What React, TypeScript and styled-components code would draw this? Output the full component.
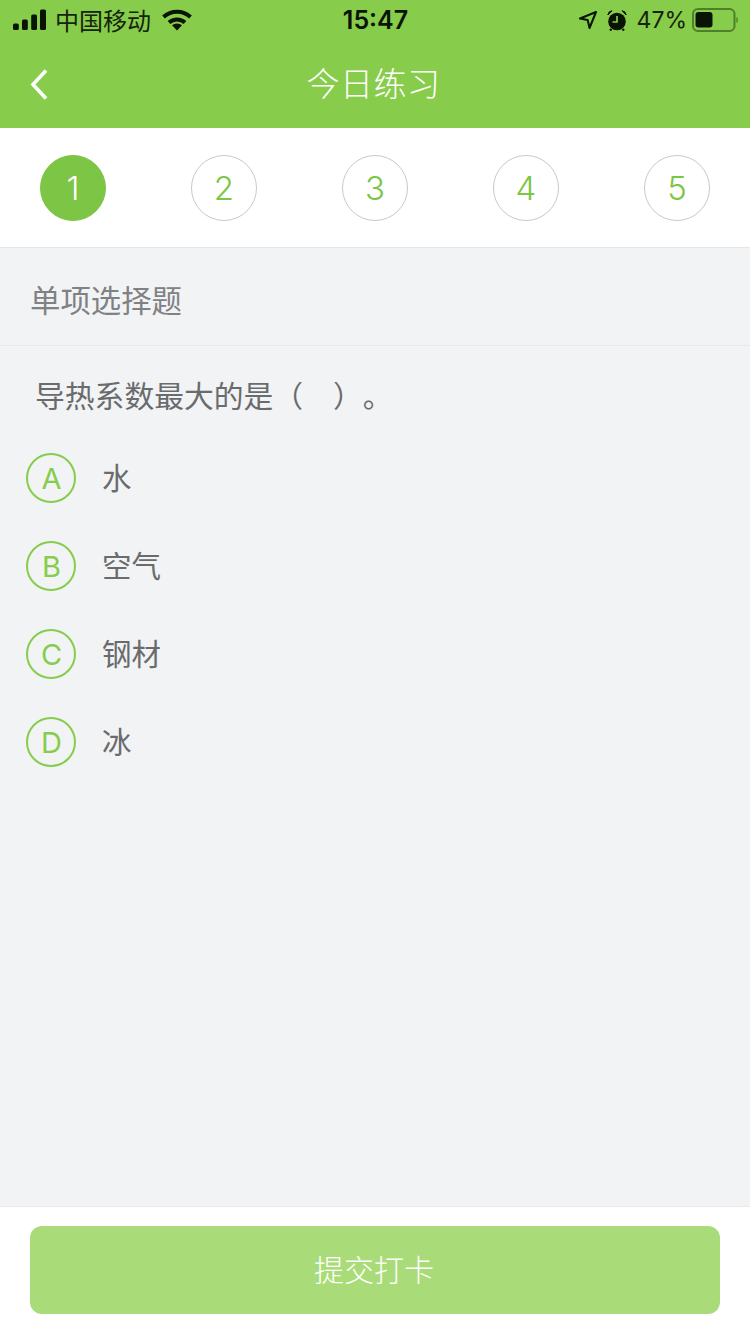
import React from "react";
import styled, { createGlobalStyle } from "styled-components";

const FONT = `"Noto Sans CJK SC", Inter, "Liberation Sans", sans-serif`;
const GREEN = "#87cc4b";

const Global = createGlobalStyle`
  html, body { margin: 0; padding: 0; background: #f2f3f5; }
  * { box-sizing: border-box; }
`;
const Page = styled.div`
  width: 750px; height: 1334px; display: flex; flex-direction: column;
  background: #f2f3f5; font-family: ${FONT}; overflow: hidden;
`;
const Header = styled.header`
  background: ${GREEN}; height: 128px; display: flex; flex-direction: column; flex: none;
`;
const StatusBar = styled.div`
  height: 40px; display: grid; grid-template-columns: 1fr auto 1fr; align-items: center;
  padding: 0 12px 0 13px; color: #0d1a05;
`;
const StatusLeft = styled.div`display: flex; align-items: center;`;
const StatusRight = styled.div`display: flex; align-items: center; justify-content: flex-end;`;
const Carrier = styled.span`font-size: 24px; line-height: 40px; margin: 0 11px 0 9px; color: #15240c; font-weight: 400;`;
const Clock = styled.span`font-family: Inter, "Liberation Sans", sans-serif; font-size: 25px; font-weight: 600; color: #0a1404;`;
const Percent = styled.span`font-family: Inter, "Liberation Sans", sans-serif; font-size: 23px; font-weight: 400; margin: 0 5px 0 10px; color: #15240c;`;
const NavBar = styled.div`
  height: 88px; display: flex; align-items: center; justify-content: center; position: relative; padding: 0 3px 4px 0;
`;
const BackButton = styled.button`
  position: absolute; left: 30px; top: 29px; padding: 0; border: 0; background: none; display: flex;
`;
const Title = styled.h1`
  margin: 0; font-size: 33px; font-weight: 300; color: #fff; letter-spacing: 0.5px; line-height: 44px;
`;
const Steps = styled.nav`
  flex: none; height: 120px; background: #fff; border-bottom: 1px solid #e6e6e6;
  display: flex; justify-content: space-between; align-items: flex-start; padding: 27px 40px 0;
`;
const Step = styled.div<{ $active?: boolean }>`
  width: 66px; height: 66px; border-radius: 50%;
  border: 1px solid ${(p) => (p.$active ? "#7cc545" : "#c9c9c9")};
  background: ${(p) => (p.$active ? "#7cc545" : "#fff")};
  color: ${(p) => (p.$active ? "#fff" : "#7cc545")};
  display: flex; align-items: center; justify-content: center;
  font-family: Inter, "Liberation Sans", sans-serif; font-size: 33px; font-weight: 300;
`;
const Main = styled.main`flex: 1; display: flex; flex-direction: column;`;
const SectionTitle = styled.div`
  height: 98px; border-bottom: 1px solid #e7e8ea; padding: 32px 0 0 30px;
  font-size: 30.4px; line-height: 38px; font-weight: 400; color: #808183;
`;
const Question = styled.p`
  margin: 0; padding: 28px 0 0 35px; font-size: 29.8px; line-height: 40px; font-weight: 400; color: #6a6b6d;
  white-space: pre; text-spacing-trim: space-all;
`;
const Options = styled.ul`
  list-style: none; margin: 39px 0 0; padding: 0 0 0 26px; display: flex; flex-direction: column; gap: 38px;
`;
const Option = styled.li`display: flex; align-items: center; gap: 26px;`;
const Badge = styled.span`
  width: 50px; height: 50px; border-radius: 50%; border: 2px solid #86cd4b; color: #86cd4b;
  display: flex; align-items: center; justify-content: center;
  font-family: Inter, "Liberation Sans", sans-serif; font-size: 29px; font-weight: 400; padding-left: 1px;
`;
const OptionText = styled.span`font-size: 29.5px; line-height: 40px; font-weight: 400; color: #6a6b6d; padding-bottom: 5px;`;
const Footer = styled.footer`
  flex: none; height: 128px; background: #fff; border-top: 1px solid #e8e9ec; padding: 19px 30px 0;
`;
const Submit = styled.button`
  width: 690px; height: 88px; border: 0; border-radius: 12px; background: #a9dc78; color: #fff;
  font-family: ${FONT}; font-size: 30px; font-weight: 300; padding: 0 2px 4px 0;
`;

const Signal = () => (
  <svg width="33" height="22" viewBox="0 0 33 22" fill="#0a1404">
    <rect x="0" y="14.5" width="5.8" height="6.5" rx="1.5" />
    <rect x="9" y="10.5" width="5.8" height="10.5" rx="1.5" />
    <rect x="18.2" y="5.5" width="5.8" height="15.5" rx="1.5" />
    <rect x="27" y="0.5" width="6" height="20.5" rx="1.5" />
  </svg>
);
const Wifi = () => (
  <svg width="30" height="22" viewBox="0 0 30 22">
    <path d="M1.5 8 A20 20 0 0 1 28.5 8" fill="none" stroke="#0a1404" strokeWidth="4" />
    <path d="M7 13.5 A12 12 0 0 1 23 13.5" fill="none" stroke="#0a1404" strokeWidth="4" />
    <path d="M10 16.3 A7.5 7.5 0 0 1 20 16.3 L15 21.5 Z" fill="#0a1404" />
  </svg>
);
const Location = () => (
  <svg width="18" height="18" viewBox="0 0 18 18" style={{ marginRight: 10 }}>
    <path d="M17 1 L1 7.5 L8.7 9 L10.5 17 Z" fill="none" stroke="#0a1404" strokeWidth="2" strokeLinejoin="round" />
  </svg>
);
const Alarm = () => (
  <svg width="20" height="21" viewBox="0 0 20 21">
    <circle cx="10" cy="11.5" r="8.8" fill="#0a1404" />
    <path d="M0.8 5 Q1.5 1 5 0.8 Z M19.2 5 Q18.5 1 15 0.8 Z" fill="#0a1404" stroke="#0a1404" strokeWidth="1" />
    <path d="M4.5 19 L3 20.5 M15.5 19 L17 20.5" stroke="#0a1404" strokeWidth="2.2" />
    <path d="M10 6 V12 H5.5" fill="none" stroke="#87cc4b" strokeWidth="1.7" />
  </svg>
);
const Battery = () => (
  <svg width="46" height="24" viewBox="0 0 46 24">
    <rect x="1" y="1" width="41.5" height="22" rx="5" fill="none" stroke="#4f7f2c" strokeWidth="2" />
    <rect x="3.5" y="4" width="17" height="15.5" rx="3" fill="#0a1404" />
    <path d="M45 9.5 V14.5" fill="none" stroke="#4f7f2c" strokeWidth="1.4" />
  </svg>
);
const Chevron = () => (
  <svg width="18" height="31" viewBox="0 0 18 31">
    <path d="M16 1.5 L3 15.5 L16 29.5" fill="none" stroke="#fff" strokeWidth="3.6" />
  </svg>
);

const options = [
  ["A", "水"],
  ["B", "空气"],
  ["C", "钢材"],
  ["D", "冰"],
];

export default function App() {
  return (
    <Page>
      <Global />
      <Header>
        <StatusBar>
          <StatusLeft>
            <Signal />
            <Carrier>中国移动</Carrier>
            <Wifi />
          </StatusLeft>
          <Clock>15:47</Clock>
          <StatusRight>
            <Location />
            <Alarm />
            <Percent>47%</Percent>
            <Battery />
          </StatusRight>
        </StatusBar>
        <NavBar>
          <BackButton aria-label="返回"><Chevron /></BackButton>
          <Title>今日练习</Title>
        </NavBar>
      </Header>
      <Steps>
        {[1, 2, 3, 4, 5].map((n) => (
          <Step key={n} $active={n === 1}>{n}</Step>
        ))}
      </Steps>
      <Main>
        <SectionTitle>单项选择题</SectionTitle>
        <Question>导热系数最大的是（　）。</Question>
        <Options>
          {options.map(([k, t]) => (
            <Option key={k}>
              <Badge>{k}</Badge>
              <OptionText>{t}</OptionText>
            </Option>
          ))}
        </Options>
      </Main>
      <Footer>
        <Submit>提交打卡</Submit>
      </Footer>
    </Page>
  );
}
